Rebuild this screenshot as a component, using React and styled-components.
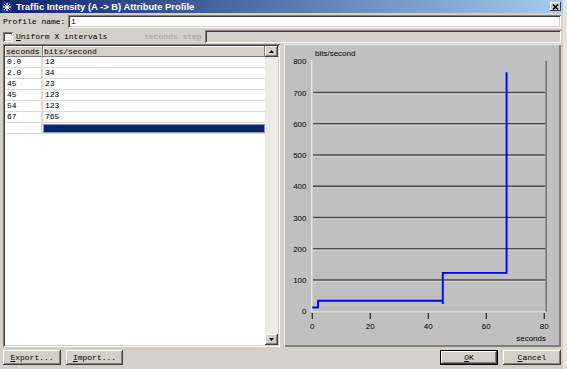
import React from 'react'
import styled, { createGlobalStyle } from 'styled-components'

const GlobalStyle = createGlobalStyle`
  html, body { margin: 0; padding: 0; background: #d4d0c8; }
  body { font-family: "Liberation Mono", "DejaVu Sans Mono", monospace; font-size: 8px; color: #000; }
  * { box-sizing: border-box; }
`

const raised = `box-shadow: inset -1px -1px #404040, inset 1px 1px #ffffff, inset -2px -2px #808080, inset 2px 2px #d4d0c8;`
const sunken = `box-shadow: inset 1px 1px #808080, inset -1px -1px #ffffff, inset 2px 2px #404040, inset -2px -2px #d4d0c8;`

const Window = styled.div`
  width: 567px;
  height: 369px;
  display: flex;
  flex-direction: column;
  background: #d4d0c8;
  border-right: 4px solid #e6e4de;
  overflow: hidden;
`

const TitleBar = styled.div`
  height: 13px;
  display: flex;
  align-items: center;
  gap: 4px;
  padding: 0 2px 0 2px;
  background: linear-gradient(90deg, #0a246a 0%, #a6caf0 100%);
`

const TitleText = styled.div`
  flex: 1;
  font-family: "Liberation Sans", Arial, sans-serif;
  font-weight: bold;
  font-size: 9.4px;
  color: #fff;
  white-space: nowrap;
`

const CloseBtn = styled.div`
  width: 11px;
  height: 9px;
  background: #d4d0c8;
  box-shadow: inset -1px -1px #404040, inset 1px 1px #ffffff;
  display: grid;
  place-items: center;
`

const FieldRow = styled.div`
  display: flex;
  align-items: center;
  height: 13px;
  margin-top: ${p => p.$top || 2}px;
  padding: 0 2px 0 3px;
  gap: 3px;
`

const Label = styled.span`
  white-space: nowrap;
  width: ${p => p.$w ? p.$w + 'px' : 'auto'};
  color: ${p => p.$dim ? '#a0a0a0' : '#000'};
`

const TextInput = styled.div`
  flex: 1;
  height: 13px;
  padding: 2px 3px;
  line-height: 9px;
  background: ${p => p.$disabled ? '#d4d0c8' : '#fff'};
  ${sunken}
`

const CheckBox = styled.div`
  width: 10px;
  height: 10px;
  background: #fff;
  ${sunken}
`

const Main = styled.div`
  display: flex;
  height: 303px;
  margin-top: 1px;
  padding: 0 2px 0 3px;
  gap: 4px;
`

const TablePanel = styled.div`
  width: 277px;
  display: flex;
  padding: 2px;
  background: #fff;
  ${sunken}
`

const Grid = styled.div`
  flex: 1;
  display: flex;
  flex-direction: column;
  background: #fff;
`

const HeaderRow = styled.div`
  display: grid;
  grid-template-columns: 38px 1fr;
  height: 11px;
`

const HeaderCell = styled.div`
  background: #d4d0c8;
  padding: 1px 1px 0 1px;
  line-height: 10px;
  box-shadow: inset -1px -1px #808080, inset 1px 1px #ffffff;
  white-space: nowrap;
  overflow: hidden;
`

const Row = styled.div`
  display: grid;
  grid-template-columns: 38px 1fr;
  height: 11px;
  border-bottom: 1px solid #dedcd6;
`

const Cell = styled.div`
  padding-left: 2px;
  line-height: 10px;
  border-right: ${p => p.$first ? '2px solid #dedcd6' : 'none'};
  background: ${p => p.$selected ? '#0a246a' : '#fff'};
  box-shadow: ${p => p.$selected ? 'inset 0 0 0 1px #8a96b8' : 'none'};
  margin: ${p => p.$selected ? '1px 0 0 0' : '0'};
`

const ScrollBar = styled.div`
  width: 13px;
  display: flex;
  flex-direction: column;
  justify-content: space-between;
  background: #ecebe6;
`

const ArrowBtn = styled.div`
  height: 11px;
  background: #d4d0c8;
  display: grid;
  place-items: center;
  ${raised}
`

const ChartPanel = styled.div`
  flex: 1;
  background: #c0c0c0;
  box-shadow: inset 1px 1px #ececec, inset -2px -2px #808080;
  display: flex;
`

const Footer = styled.div`
  display: flex;
  align-items: center;
  margin-top: 3px;
  padding: 0 2px 0 3px;
  gap: 5px;
`

const Spacer = styled.div`
  flex: 1;
`

const Button = styled.div`
  width: ${p => p.$w || 58}px;
  height: 15px;
  display: grid;
  place-items: center;
  background: #d4d0c8;
  ${p => p.$default
    ? 'box-shadow: inset 0 0 0 1px #000, inset -2px -2px #404040, inset 2px 2px #ffffff, inset -3px -3px #808080;'
    : raised}
  white-space: nowrap;
  u { text-decoration: underline; }
`

const rows = [
  ['0.0', '12'],
  ['2.0', '34'],
  ['45', '23'],
  ['45', '123'],
  ['54', '123'],
  ['67', '765'],
]

const tx = t => 312.3 + 2.9 * t
const ty = v => 311.3 - 0.3125 * v

function Chart() {
  const pts = rows.map(([s, b]) => [parseFloat(s), parseFloat(b)])
  let d = `M${tx(pts[0][0])} ${ty(pts[0][1])}`
  for (let i = 1; i < pts.length; i++) {
    d += ` H${tx(pts[i][0])} V${ty(pts[i][1])}`
  }
  const grid = [100, 200, 300, 400, 500, 600, 700]
  const yLabels = [0, 100, 200, 300, 400, 500, 600, 700, 800]
  const xLabels = [0, 20, 40, 60, 80]
  const font = { fontFamily: '"Liberation Sans", Arial, sans-serif', fontSize: 8 }
  return (
    <svg width="277" height="301" viewBox="284 44 277 301">
      <text x="315" y="56" {...font} fill="#000">bits/second</text>
      {grid.map(v => (
        <g key={v}>
          <line x1="313" x2="545.5" y1={ty(v)} y2={ty(v)} stroke="#484848" strokeWidth="1.4" />
          <line x1="313" x2="545.5" y1={ty(v) + 1.3} y2={ty(v) + 1.3} stroke="#d8d8d8" strokeWidth="0.8" />
        </g>
      ))}
      <line x1="311.8" x2="311.8" y1="60" y2="312" stroke="#f4f4f4" strokeWidth="1" />
      <line x1="546.2" x2="546.2" y1="61" y2="312" stroke="#6a6a6a" strokeWidth="1.4" />
      <line x1="312" x2="546" y1="311.8" y2="311.8" stroke="#e8e8e8" strokeWidth="1" />
      {yLabels.map(v => (
        <text key={v} x="306.5" y={ty(v) + 3} textAnchor="end" {...font} fill="#000">{v}</text>
      ))}
      {xLabels.map(t => (
        <g key={t}>
          <line x1={tx(t)} x2={tx(t)} y1="313" y2="319" stroke="#303030" strokeWidth="1.3" />
          <text x={tx(t)} y="328.5" textAnchor="middle" {...font} fill="#000">{t}</text>
        </g>
      ))}
      <text x="546" y="341" textAnchor="end" {...font} fill="#000">seconds</text>
      <path d={d} fill="none" stroke="#0000ff" strokeWidth="1.9" />
    </svg>
  )
}

function Arrow({ up }) {
  return (
    <svg width="5" height="3" viewBox="0 0 5 3">
      <path d={up ? 'M0 3 L2.5 0 L5 3 Z' : 'M0 0 L2.5 3 L5 0 Z'} fill="#000" />
    </svg>
  )
}

export default function App() {
  return (
    <Window>
      <GlobalStyle />
      <TitleBar>
        <svg width="10" height="10" viewBox="0 0 10 10">
          <rect x="0" y="0" width="10" height="10" fill="#2a3c8a" />
          <path d="M5 1 V9 M1 5 H9 M2 2 L8 8 M8 2 L2 8" stroke="#fff" strokeWidth="1" />
          <circle cx="5" cy="5" r="1.6" fill="#fff" />
        </svg>
        <TitleText>Traffic Intensity (A -&gt; B) Attribute Profile</TitleText>
        <CloseBtn>
          <svg width="7" height="6" viewBox="0 0 7 6">
            <path d="M1 0.5 L6 5.5 M6 0.5 L1 5.5" stroke="#000" strokeWidth="1.6" />
          </svg>
        </CloseBtn>
      </TitleBar>

      <FieldRow $top={2}>
        <Label $w={62}>Profile name:</Label>
        <TextInput>1</TextInput>
      </FieldRow>

      <FieldRow $top={2}>
        <CheckBox />
        <Label $w={125}><u>U</u>niform X intervals</Label>
        <Label $dim>seconds step</Label>
        <TextInput $disabled />
      </FieldRow>

      <Main>
        <TablePanel>
          <Grid>
            <HeaderRow>
              <HeaderCell>seconds</HeaderCell>
              <HeaderCell>bits/second</HeaderCell>
            </HeaderRow>
            {rows.map(([s, b], i) => (
              <Row key={i}>
                <Cell $first>{s}</Cell>
                <Cell>{b}</Cell>
              </Row>
            ))}
            <Row>
              <Cell $first />
              <Cell $selected />
            </Row>
          </Grid>
          <ScrollBar>
            <ArrowBtn><Arrow up /></ArrowBtn>
            <ArrowBtn><Arrow /></ArrowBtn>
          </ScrollBar>
        </TablePanel>
        <ChartPanel>
          <Chart />
        </ChartPanel>
      </Main>

      <Footer>
        <Button><span><u>E</u>xport...</span></Button>
        <Button $w={57}><span><u>I</u>mport...</span></Button>
        <Spacer />
        <Button $default $w={58}><span><u>O</u>K</span></Button>
        <Button><span><u>C</u>ancel</span></Button>
      </Footer>
    </Window>
  )
}
